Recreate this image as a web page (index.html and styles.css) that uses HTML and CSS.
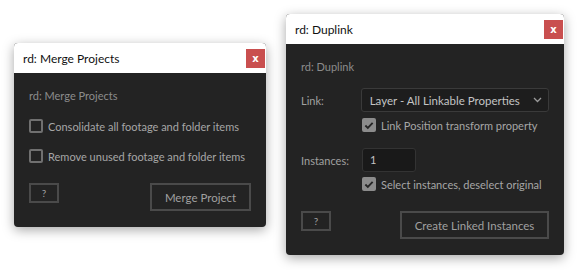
FILE: index.html
```html
<!DOCTYPE html>
<html lang="en">
<head>
  <meta charset="UTF-8" />
  <title>rd: Merge Projects / rd: Duplink</title>
  <link rel="stylesheet" href="styles.css">
</head>
<body>

  <!-- Fenetre 1 : Merge Projects -->
  <div class="window win-merge">
    <div class="titlebar">
      <span>rd: Merge Projects</span>
      <button class="close-btn">x</button>
    </div>
    <div class="panel">
      <p class="panel-title">rd: Merge Projects</p>
      <label class="check"><span class="box"></span>Consolidate all footage and folder items</label>
      <label class="check"><span class="box"></span>Remove unused footage and folder items</label>
      <div class="actions">
        <button class="btn help">?</button>
        <button class="btn main merge">Merge Project</button>
      </div>
    </div>
  </div>

  <!-- Fenetre 2 : Duplink -->
  <div class="window win-dup">
    <div class="titlebar">
      <span>rd: Duplink</span>
      <button class="close-btn">x</button>
    </div>
    <div class="panel">
      <p class="panel-title">rd: Duplink</p>
      <div class="row">
        <span class="label">Link:</span>
        <div class="select">
          <span>Layer - All Linkable Properties</span>
          <svg width="9" height="6" viewBox="0 0 9 6"><path d="M1 1 L4.5 4.5 L8 1" fill="none" stroke="#9a9a9a" stroke-width="1.3"/></svg>
        </div>
      </div>
      <label class="check indent"><span class="box checked"><svg width="11" height="9" viewBox="0 0 11 9"><path d="M1.5 4.5 L4.2 7.2 L9.5 1.5" fill="none" stroke="#262626" stroke-width="2"/></svg></span>Link Position transform property</label>
      <div class="row row-inst">
        <span class="label">Instances:</span>
        <div class="field">1</div>
      </div>
      <label class="check indent last"><span class="box checked"><svg width="11" height="9" viewBox="0 0 11 9"><path d="M1.5 4.5 L4.2 7.2 L9.5 1.5" fill="none" stroke="#262626" stroke-width="2"/></svg></span>Select instances, deselect original</label>
      <div class="actions">
        <button class="btn help">?</button>
        <button class="btn main create">Create Linked Instances</button>
      </div>
    </div>
  </div>

</body>
</html>
```

FILE: styles.css
```css
body {
  margin: 0;
  width: 578px;
  height: 270px;
  background-color: #fff;
  font-family: 'Lato', 'Open Sans', sans-serif;
  font-size: 11px;
  overflow: hidden;
  position: relative;
  white-space: nowrap;
}

.window {
  position: absolute;
  background-color: #232323;
  border-radius: 4px;
  overflow: hidden;
  box-shadow: 0 3px 12px rgba(0,0,0,0.35);
}

.win-merge {
  left: 14px;
  top: 43px;
  width: 252px;
  height: 184px;
}

.win-dup {
  left: 286px;
  top: 14px;
  width: 278px;
  height: 241px;
}

.titlebar {
  height: 30px;
  background-color: #fff;
  color: #111;
  font-size: 12px;
  display: flex;
  align-items: center;
  justify-content: space-between;
  padding-left: 9px;
  padding-right: 1px;
}

.close-btn {
  width: 19px;
  height: 19px;
  border: none;
  padding: 0;
  background-color: #c94f4f;
  color: #fff;
  font-family: 'DejaVu Sans', sans-serif;
  font-weight: bold;
  font-size: 10px;
  line-height: 17px;
}

.panel {
  padding: 15px 15px 0;
  color: #a2a2a2;
}

.panel-title {
  margin: 0 0 7px;
  color: #8c8c8c;
  line-height: 16px;
}

.check {
  display: flex;
  align-items: center;
  gap: 5px;
  height: 30px;
  color: #a6a6a6;
}

.box {
  flex: none;
  width: 10px;
  height: 10px;
  border: 2px solid #707070;
  border-radius: 2px;
  display: flex;
  align-items: center;
  justify-content: center;
}

.box.checked {
  background-color: #8c8c8c;
  border-color: #8c8c8c;
}

.actions {
  display: flex;
  justify-content: space-between;
  align-items: flex-start;
  margin-top: 12px;
}

.btn {
  background: transparent;
  border: 2px solid #4a4a4a;
  color: #a0a0a0;
  font-family: 'Lato', 'Open Sans', sans-serif;
  font-size: 11.5px;
  padding: 0;
}

.help {
  width: 30px;
  height: 20px;
  font-size: 10px;
}

.main {
  height: 28px;
}

.merge {
  width: 101px;
}

.create {
  width: 149px;
}

/* Duplink */
.win-dup .panel-title {
  margin-bottom: 13px;
}

.row {
  display: flex;
  align-items: center;
}

.label {
  width: 61px;
  color: #a0a0a0;
}

.select {
  width: 176px;
  height: 22px;
  border: 1px solid #3a3a3a;
  border-radius: 3px;
  background-color: #1d1d1d;
  display: flex;
  align-items: center;
  justify-content: space-between;
  padding: 0 6px 0 8px;
  color: #c4c4c4;
  font-size: 11.5px;
}

.indent {
  margin-left: 61px;
  height: 26px;
}

.row-inst {
  margin-top: 10px;
}

.last {
  margin-top: -1px;
}

.field {
  width: 45px;
  height: 22px;
  border: 1px solid #333;
  border-radius: 3px;
  background-color: #191919;
  color: #c4c4c4;
  line-height: 22px;
  padding-left: 7px;
}

.win-dup .actions {
  margin-top: 14px;
}
```
